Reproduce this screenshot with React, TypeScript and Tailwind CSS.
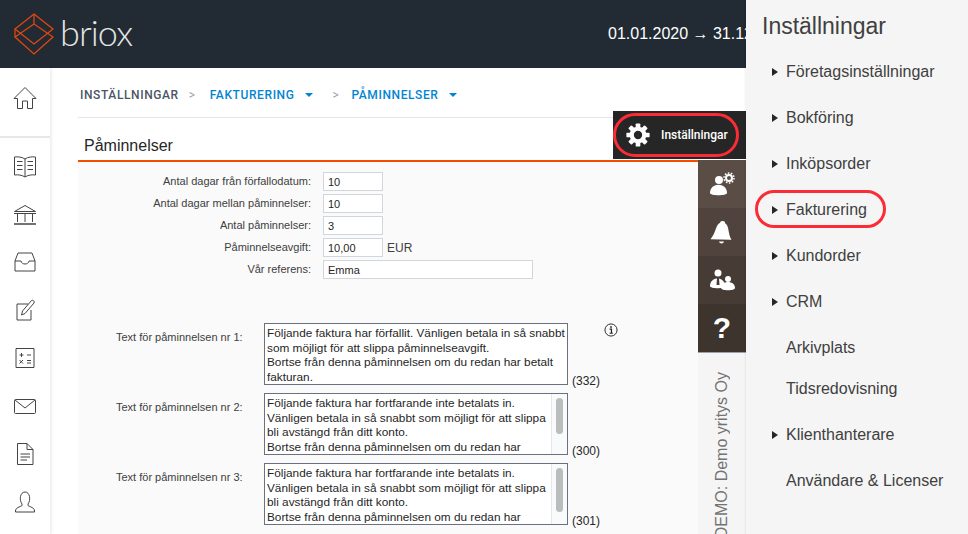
import { Fragment } from "react";

const sans = { fontFamily: '"Liberation Sans", Arial, sans-serif' };

function Logo() {
  return (
    <div className="flex items-center gap-1.5">
      <svg width="40" height="42" viewBox="13 12 40 42" fill="none" stroke="#e8470f" strokeWidth="1.2">
        <path d="M33 13 52 28 33 43 14 28Z" />
        <path d="M33 13V23L52 36 33 53 14 36 33 23" />
        <path d="M14 28V36" />
      </svg>
      <span className="-mt-1 font-['Lato'] text-4xl font-light tracking-tight text-neutral-200">briox</span>
    </div>
  );
}

const iconProps = {
  width: 24,
  height: 24,
  viewBox: "0 0 24 24",
  fill: "none",
  stroke: "#444",
  strokeWidth: 1,
};

const sideIcons = [
  // book
  <svg {...iconProps} key="book">
    <path d="M12 5C9 3 5 2.500 1.500 3V21C5 20.500 9 21 12 23 15 21 19 20.500 22.500 21V3C19 2.500 15 3 12 5ZM12 5V23" />
    <path d="M4 7.500H9.500M4 11.500H9.500M4 15.500H9.500M14.500 7.500H20M14.500 11.500H20M14.500 15.500H20" />
  </svg>,
  // bank
  <svg {...iconProps} key="bank">
    <path d="M1.500 9.500 12 3.500 22.500 9.500ZM1 11.500H23M4.500 12V20M12 12V20M19.500 12V20" />
    <path d="M1 22H23" strokeWidth="1.500" />
  </svg>,
  // inbox
  <svg {...iconProps} key="inbox">
    <path d="M5 3H19L22 11V21H2V11ZM2 11H8C8.500 15 15.500 15 16 11H22" />
  </svg>,
  // edit
  <svg {...iconProps} key="edit">
    <path d="M15 6H4V22H18V12" />
    <path d="M8.500 17 9.500 13 18.500 2.500C20 1.500 22 3.500 21 5L12 15.500Z" />
  </svg>,
  // calculator
  <svg {...iconProps} key="calc">
    <path d="M3 2.500H21V21.500H3Z" />
    <path d="M6.500 9H10.500M8.500 7V11M14 9H18M6.500 14 10 17.500M10 14 6.500 17.500M14 14.500H18M14 17H18" />
  </svg>,
  // mail
  <svg {...iconProps} key="mail">
    <path d="M2.500 5.500H21.500Q22.500 5.500 22.500 6.500V18.500Q22.500 19.500 21.500 19.500H2.500Q1.500 19.500 1.500 18.500V6.500Q1.500 5.500 2.500 5.500Z" />
    <path d="M2 6 12 14 22 6" />
  </svg>,
  // document
  <svg {...iconProps} key="doc">
    <path d="M4.500 1.500H14L20 7.500V22.500H4.500ZM14 1.500V7.500H20" />
    <path d="M7.500 12H17M7.500 15H17M7.500 18H14" />
  </svg>,
  // user
  <svg {...iconProps} key="user">
    <path d="M9 15.500V14C6 10 7 2 12 2 17 2 18 10 15 14V15.500C17 17 21.500 17.500 21.500 21V22H2.500V21C2.500 17.500 7 17 9 15.500Z" />
  </svg>,
];

function Sidebar() {
  return (
    <aside className="flex w-12.5 shrink-0 flex-col bg-white shadow-[2px_0_2px_#f0f0f0]">
      <div className="flex h-17.5 items-center justify-center border-b-2 border-gray-200 pb-2">
        <svg {...iconProps}>
          <path d="M12 1.500 1 12.500H4.500V22.500H9.500V15H14.500V22.500H19.500V12.500H23Z" />
        </svg>
      </div>
      <div className="flex flex-col pt-1">
        {sideIcons.map((icon, i) => (
          <div key={i} className="flex h-12 items-center justify-center">
            {icon}
          </div>
        ))}
      </div>
    </aside>
  );
}

function Caret() {
  return <span className="ml-2.5 mr-5 border-x-4 border-t-4 border-x-transparent border-t-sky-600" />;
}

function Breadcrumb() {
  return (
    <div className="flex h-12.5 items-center border-b border-gray-200 pl-0.5 pt-1 font-['Roboto'] text-xs font-medium tracking-wider">
      <span className="text-gray-600">INSTÄLLNINGAR</span>
      <span className="mx-2.5 font-normal text-gray-400">&gt;</span>
      <span className="ml-1 text-sky-600">FAKTURERING</span>
      <Caret />
      <span className="font-normal text-gray-400">&gt;</span>
      <span className="ml-3 text-sky-600">PÅMINNELSER</span>
      <Caret />
    </div>
  );
}

const fields = [
  { label: "Antal dagar från förfallodatum:", value: "10" },
  { label: "Antal dagar mellan påminnelser:", value: "10" },
  { label: "Antal påminnelser:", value: "3" },
  { label: "Påminnelseavgift:", value: "10,00", unit: "EUR" },
  { label: "Vår referens:", value: "Emma", wide: true },
];

const texts = [
  {
    n: 1,
    count: 332,
    body: "Följande faktura har förfallit. Vänligen betala in så snabbt\nsom möjligt för att slippa påminnelseavgift.\nBortse från denna påminnelsen om du redan har betalt\nfakturan.",
  },
  {
    n: 2,
    count: 300,
    scroll: "h-9",
    body: "Följande faktura har fortfarande inte betalats in.\nVänligen betala in så snabbt som möjligt för att slippa\nbli avstängd från ditt konto.\nBortse från denna påminnelsen om du redan har\nbetalt fakturan.",
  },
  {
    n: 3,
    count: 301,
    scroll: "h-11",
    body: "Följande faktura har fortfarande inte betalats in.\nVänligen betala in så snabbt som möjligt för att slippa\nbli avstängd från ditt konto.\nBortse från denna påminnelsen om du redan har\nbetalt fakturan.",
  },
];

function PaymentForm() {
  return (
    <div className="flex-1 bg-neutral-50 pt-2.5 text-[11px] text-neutral-700">
      <div className="grid grid-cols-[233px_1fr] items-center gap-x-3 gap-y-[3px]">
        {fields.map((f) => (
          <Fragment key={f.label}>
            <label className="text-right">{f.label}</label>
            <div className="flex items-center gap-1">
              <input
                readOnly
                value={f.value}
                className={`h-[19px] border border-gray-300 bg-white px-1 text-neutral-800 ${f.wide ? "w-52.5" : "w-15"}`}
              />
              {f.unit && <span className="text-xs">{f.unit}</span>}
            </div>
          </Fragment>
        ))}
      </div>

      <div className="mt-11 flex flex-col gap-2 pl-9.5">
        {texts.map((t) => (
          <div key={t.n} className="flex">
            <label className="w-37 pt-1.5">Text för påminnelsen nr {t.n}:</label>
            <div className="relative h-15.5 w-76 border border-gray-500 bg-white">
              <textarea
                readOnly
                wrap="off"
                value={t.body}
                className="h-full w-full resize-none overflow-hidden py-0.5 pl-0.5 text-[11.8px] leading-[14.5px] text-neutral-800"
              />
              {t.scroll && (
                <div className="absolute inset-y-0 right-0 w-4 border-l border-gray-200 bg-gray-50 px-1 py-1">
                  <div className={`rounded-full bg-neutral-400/70 ${t.scroll}`} />
                </div>
              )}
            </div>
            <span className="-mb-0.5 ml-1 self-end text-xs leading-3 text-neutral-800">({t.count})</span>
            {t.n === 1 && (
              <svg className="ml-1" width="14" height="14" viewBox="0 0 15 15" fill="none" stroke="#222">
                <circle cx="7.500" cy="7.500" r="6.500" />
                <path d="M6 6.500H8V11M6 11H9.500" strokeWidth="1.300" />
                <path d="M7.500 3.500V5" strokeWidth="1.800" />
              </svg>
            )}
          </div>
        ))}
      </div>
    </div>
  );
}

function GearIcon({ size = 26 }: { size?: number }) {
  const teeth = [0, 45, 90, 135, 180, 225, 270, 315];
  return (
    <svg width={size} height={size} viewBox="0 0 28 28" fill="white">
      <path
        fillRule="evenodd"
        d="M14 5a9 9 0 1 0 0 18 9 9 0 0 0 0-18Zm0 4.500a4.500 4.500 0 1 1 0 9 4.500 4.500 0 0 1 0-9Z"
      />
      {teeth.map((a) => (
        <rect key={a} x="11.500" y="1.500" width="5" height="5" rx="1" transform={`rotate(${a} 14 14)`} />
      ))}
    </svg>
  );
}

function ToolStrip() {
  return (
    <div className="absolute bottom-0 right-[222px] top-28 flex w-12 flex-col">
      <div className="absolute -left-[85px] -top-px flex h-12 w-[133px] items-center gap-2.5 bg-neutral-800 pl-3 text-white">
        <GearIcon />
        <span className="font-['Roboto'] text-xs font-medium">Inställningar</span>
      </div>
      <div className="h-12" />
      <div className="flex h-12 items-center justify-center bg-[#5a4d46]">
        <svg width="28" height="28" viewBox="0 0 28 28" fill="white">
          <circle cx="11" cy="10" r="4" />
          <path d="M2 23c0-11 17-11 17 0 0 3-17 3-17 0Z" />
          <circle cx="21" cy="8" r="3" fill="none" stroke="white" strokeWidth="2" />
          <circle cx="21" cy="8" r="5" fill="none" stroke="white" strokeWidth="1.500" strokeDasharray="1.600 1.500" />
        </svg>
      </div>
      <div className="flex h-12 items-center justify-center bg-[#50433d]">
        <svg width="28" height="28" viewBox="0 0 28 28" fill="white">
          <path d="M14 3c2 0 2.500 1 2.500 2C21 7 20 16 24 21L3 22C8 16 7 7 11.500 5c0-1 .5-2 2.500-2Z" transform="rotate(4 14 14)" />
          <path d="M11 23.500h5c-.5 2.500-4.500 2.500-5 0Z" />
        </svg>
      </div>
      <div className="flex h-12 items-center justify-center bg-[#463b35]">
        <svg width="28" height="28" viewBox="0 0 28 28" fill="white">
          <circle cx="10" cy="7" r="3.500" />
          <path d="M2 20c0-10 15-10 15 0 0 3-15 3-15 0Z" />
          <path d="M9 12h2l.5 7h-3Z" fill="#463b35" />
          <circle cx="20" cy="13" r="3" />
          <path d="M13 22c0-8 14-8 14 0 0 3-14 3-14 0Z" />
        </svg>
      </div>
      <div className="flex h-12 items-center justify-center bg-[#3e342e] text-3xl font-bold text-white">
        ?
      </div>
      <div className="relative flex-1 overflow-hidden border-t border-gray-400 bg-neutral-100">
        <span className="absolute -bottom-1 left-3 rotate-180 whitespace-nowrap text-base text-neutral-500 [writing-mode:vertical-rl]">
          DEMO: Demo yritys Oy
        </span>
      </div>
    </div>
  );
}

const menu = [
  { label: "Företagsinställningar", arrow: true },
  { label: "Bokföring", arrow: true },
  { label: "Inköpsorder", arrow: true },
  { label: "Fakturering", arrow: true },
  { label: "Kundorder", arrow: true },
  { label: "CRM", arrow: true },
  { label: "Arkivplats" },
  { label: "Tidsredovisning", short: true },
  { label: "Klienthanterare", arrow: true },
  { label: "Användare & Licenser" },
];

function Drawer() {
  return (
    <div className="absolute inset-y-0 right-0 w-[222px] bg-neutral-100 pl-4 pt-1.5 text-neutral-700 shadow-sm">
      <h2 className="text-[23px] leading-10">Inställningar</h2>
      <ul className="mt-2.5 flex flex-col gap-3.5 pl-2.5 text-base leading-8">
        {menu.map((m) => (
          <li key={m.label} className={`flex items-center gap-2 ${m.short ? "-mt-1.25" : ""}`}>
            <span className={`border-y-4 border-l-[6px] border-y-transparent ${m.arrow ? "border-l-neutral-800" : "border-l-transparent"}`} />
            {m.label}
          </li>
        ))}
      </ul>
    </div>
  );
}

export default function App() {
  return (
    <div className="relative flex h-screen flex-col overflow-hidden bg-white" style={sans}>
      <header className="flex h-17 shrink-0 items-center justify-between bg-[#222b33] pl-3.5 pr-[222px]">
        <Logo />
        <span className="w-34.5 overflow-hidden whitespace-nowrap text-base text-white">01.01.2020 → 31.12.2020</span>
      </header>
      <div className="flex flex-1 overflow-hidden">
        <Sidebar />
        <main className="ml-7 mr-[270px] flex flex-1 flex-col">
          <Breadcrumb />
          <h1 className="ml-1.5 mt-3.5 text-base leading-7 text-neutral-800">Påminnelser</h1>
          <div className="h-0.5 bg-orange-600" />
          <PaymentForm />
        </main>
      </div>
      <ToolStrip />
      <Drawer />
      <div className="absolute left-[613px] top-[113px] h-11 w-[126px] rounded-full border-[3px] border-red-500" />
      <div className="absolute left-[755px] top-47.5 h-9.5 w-[131px] rounded-full border-[3px] border-red-500" />
    </div>
  );
}
